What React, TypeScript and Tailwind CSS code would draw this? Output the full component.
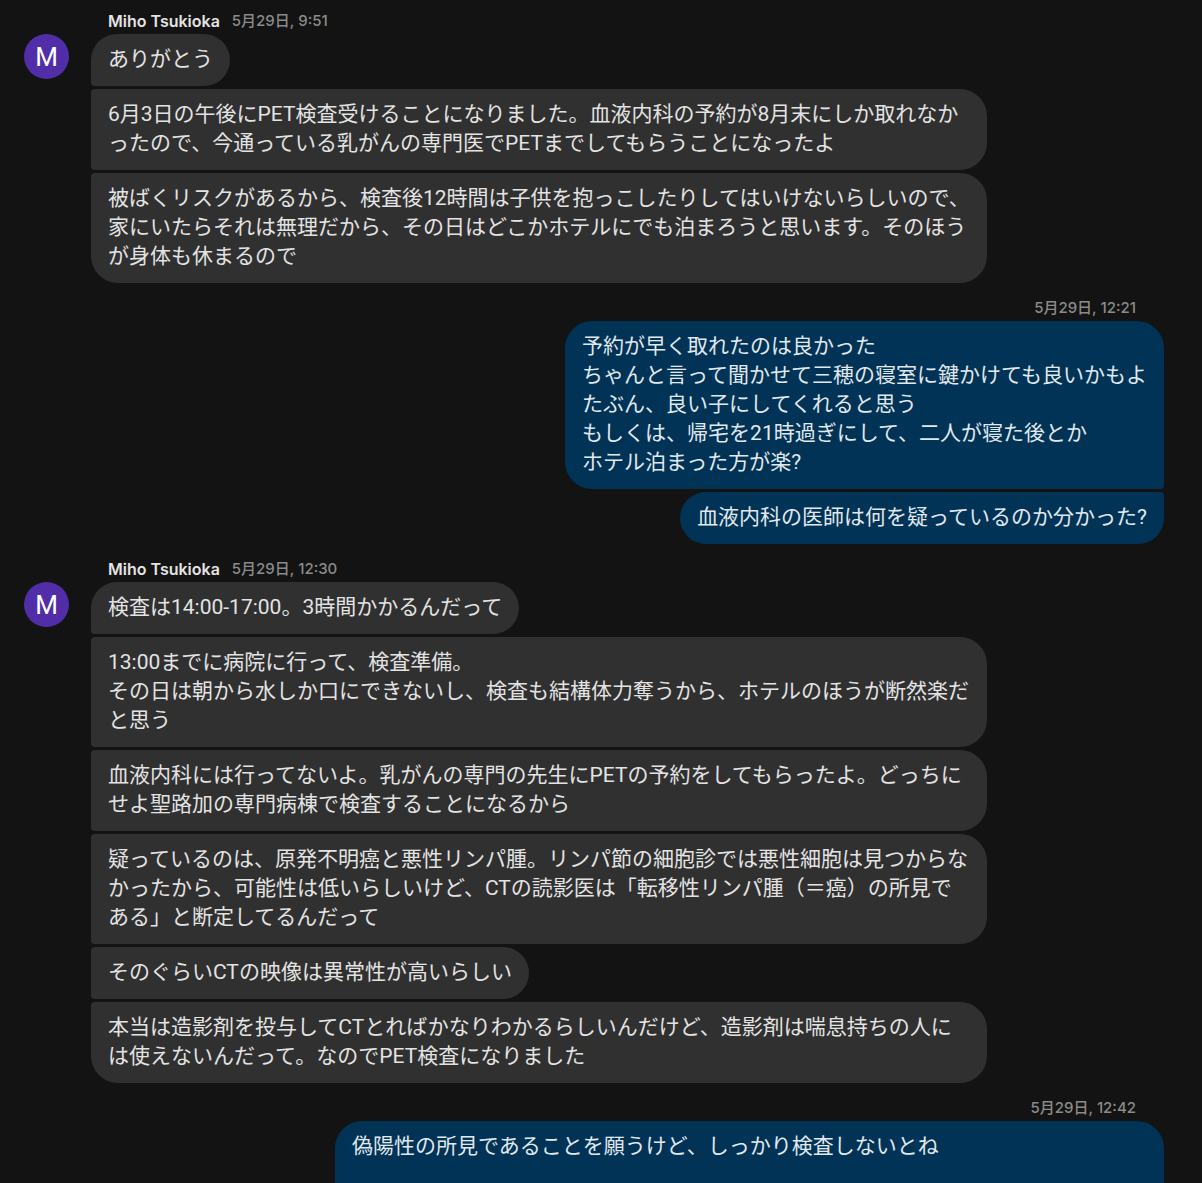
import React from "react";

type Side = "in" | "out";

type Message = {
  text: string;
  extra?: string;
};

type Group = {
  side: Side;
  sender?: string;
  time: string;
  messages: Message[];
};

const groups: Group[] = [
  {
    side: "in",
    sender: "Miho Tsukioka",
    time: "5月29日, 9:51",
    messages: [
      { text: "ありがとう" },
      {
        text: "6月3日の午後にPET検査受けることになりました。血液内科の予約が8月末にしか取れなかったので、今通っている乳がんの専門医でPETまでしてもらうことになったよ",
      },
      {
        text: "被ばくリスクがあるから、検査後12時間は子供を抱っこしたりしてはいけないらしいので、家にいたらそれは無理だから、その日はどこかホテルにでも泊まろうと思います。そのほうが身体も休まるので",
      },
    ],
  },
  {
    side: "out",
    time: "5月29日, 12:21",
    messages: [
      {
        text: "予約が早く取れたのは良かった\nちゃんと言って聞かせて三穂の寝室に鍵かけても良いかもよ\nたぶん、良い子にしてくれると思う\nもしくは、帰宅を21時過ぎにして、二人が寝た後とか\nホテル泊まった方が楽?",
      },
      { text: "血液内科の医師は何を疑っているのか分かった?" },
    ],
  },
  {
    side: "in",
    sender: "Miho Tsukioka",
    time: "5月29日, 12:30",
    messages: [
      { text: "検査は14:00-17:00。3時間かかるんだって" },
      {
        text: "13:00までに病院に行って、検査準備。\nその日は朝から水しか口にできないし、検査も結構体力奪うから、ホテルのほうが断然楽だと思う",
      },
      {
        text: "血液内科には行ってないよ。乳がんの専門の先生にPETの予約をしてもらったよ。どっちにせよ聖路加の専門病棟で検査することになるから",
      },
      {
        text: "疑っているのは、原発不明癌と悪性リンパ腫。リンパ節の細胞診では悪性細胞は見つからなかったから、可能性は低いらしいけど、CTの読影医は「転移性リンパ腫（＝癌）の所見である」と断定してるんだって",
      },
      { text: "そのぐらいCTの映像は異常性が高いらしい" },
      {
        text: "本当は造影剤を投与してCTとればかなりわかるらしいんだけど、造影剤は喘息持ちの人には使えないんだって。なのでPET検査になりました",
      },
    ],
  },
  {
    side: "out",
    time: "5月29日, 12:42",
    messages: [
      {
        text: "偽陽性の所見であることを願うけど、しっかり検査しないとね",
        extra: "w-[829px] min-h-28",
      },
    ],
  },
];

function corners(side: Side, index: number, count: number) {
  const first = index === 0;
  const last = index === count - 1;
  if (side === "in") {
    return `rounded-r-[27px] ${first ? "rounded-tl-[27px]" : "rounded-tl-[4px]"} ${
      last ? "rounded-bl-[27px]" : "rounded-bl-[4px]"
    }`;
  }
  return `rounded-l-[27px] ${first ? "rounded-tr-[27px]" : "rounded-tr-[4px]"} ${
    last ? "rounded-br-[27px]" : "rounded-br-[4px]"
  }`;
}

function Bubble({ message, side, shape }: { message: Message; side: Side; shape: string }) {
  return (
    <p
      className={`max-w-4xl whitespace-pre-wrap px-[17px] pt-[11px] pb-[12px] text-[21px] leading-[29px] ${
        side === "in" ? "bg-[#303030] text-[#e3e3e3]" : "bg-[#003355] text-[#e1e8ee]"
      } ${shape} ${message.extra ?? ""}`}
    >
      {message.text}
    </p>
  );
}

function MessageGroup({ group }: { group: Group }) {
  const incoming = group.side === "in";
  return (
    <section className="flex items-start">
      <div className="w-[67px] shrink-0 pt-6">
        {incoming && (
          <div className="flex size-[45px] items-center justify-center rounded-full bg-[#512da8] text-[26px] leading-8 text-white">
            M
          </div>
        )}
      </div>
      <div className="min-w-0 flex-1">
        <header
          className={`mb-[3px] flex items-center gap-3 pt-px font-[Inter,'Noto_Sans_CJK_JP',sans-serif] leading-5 ${
            incoming ? "pl-[17px]" : "justify-end pr-7"
          }`}
        >
          {group.sender && (
            <h2 className="text-base leading-5 font-semibold text-[#e3e3e3]">{group.sender}</h2>
          )}
          <time className="text-[15px] leading-5 font-medium text-[#8b8b8b]">{group.time}</time>
        </header>
        <div className={`flex flex-col gap-[3px] ${incoming ? "items-start" : "items-end"}`}>
          {group.messages.map((message, i) => (
            <Bubble
              key={i}
              message={message}
              side={group.side}
              shape={corners(group.side, i, group.messages.length)}
            />
          ))}
        </div>
      </div>
    </section>
  );
}

export default function App() {
  return (
    <main
      lang="ja"
      className="flex h-screen flex-col gap-[14px] overflow-hidden bg-[#131313] pt-[10px] pr-[38px] pl-6 font-[Roboto,'Noto_Sans_CJK_JP',sans-serif] *:shrink-0"
    >
      {groups.map((group, i) => (
        <MessageGroup key={i} group={group} />
      ))}
    </main>
  );
}
